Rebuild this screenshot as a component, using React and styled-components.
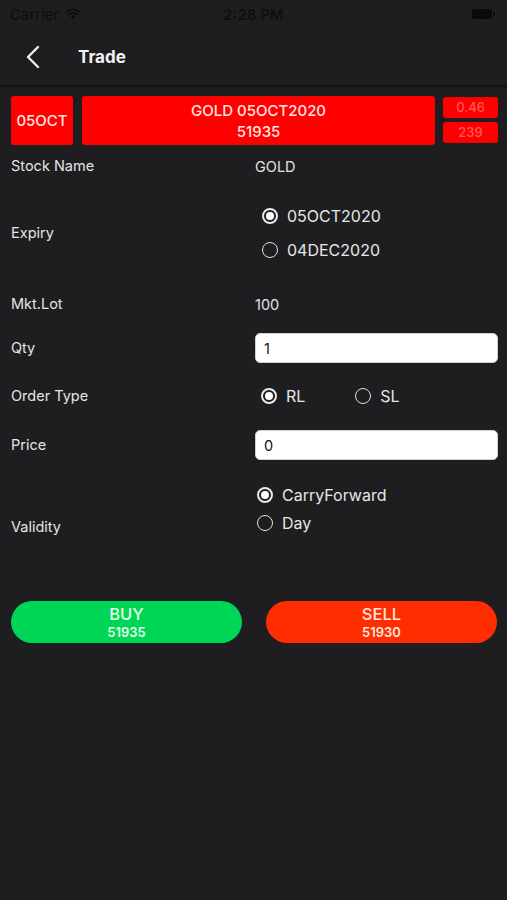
import React from 'react'
import styled, { createGlobalStyle } from 'styled-components'

const GlobalStyle = createGlobalStyle`
  html, body {
    margin: 0;
    padding: 0;
    background: #1e1e20;
  }
  body {
    font-family: Inter, "Liberation Sans", Arial, sans-serif;
  }
`

const Screen = styled.div`
  width: 507px;
  height: 900px;
  background: #1e1e20;
  display: flex;
  flex-direction: column;
`

const StatusBar = styled.div`
  height: 28px;
  display: grid;
  grid-template-columns: 1fr auto 1fr;
  align-items: center;
  padding: 0 10px;
  color: #0e0e0f;
  font-size: 15px;
`

const Carrier = styled.div`
  display: flex;
  align-items: center;
  gap: 6px;
`

const Time = styled.div`
  font-weight: 600;
`

const Battery = styled.div`
  justify-self: end;
  width: 20px;
  height: 10px;
  margin-right: 5px;
  background: #0a0a0a;
  border-radius: 2px;
  position: relative;
  &::after {
    content: '';
    position: absolute;
    right: -3px;
    top: 3px;
    width: 2px;
    height: 4px;
    background: #0a0a0a;
    border-radius: 0 1px 1px 0;
  }
`

const NavBar = styled.div`
  height: 57px;
  display: flex;
  align-items: center;
  padding-left: 26px;
  border-bottom: 2px solid #121214;
`

const NavTitle = styled.div`
  margin-left: 38px;
  color: #f2f2f2;
  font-size: 17px;
  font-weight: 700;
`

const Content = styled.div`
  padding: 9px 9px 0 11px;
  display: flex;
  flex-direction: column;
`

const TickerRow = styled.div`
  display: flex;
  height: 49px;
`

const RedBox = styled.div`
  background: #ff0000;
  border-radius: 3px;
  color: #ffe3e3;
  font-size: 15px;
  font-weight: 500;
  display: flex;
  flex-direction: column;
  align-items: center;
  justify-content: center;
  line-height: 21px;
`

const CodeBox = styled(RedBox)`
  width: 62px;
`

const NameBox = styled(RedBox)`
  width: 353px;
  margin-left: 9px;
`

const SideCol = styled.div`
  width: 55px;
  margin-left: 8px;
  display: flex;
  flex-direction: column;
  gap: 4px;
  padding-top: 1px;
`

const SmallBox = styled(RedBox)`
  height: 21px;
  font-size: 13px;
  color: #ff5a5a;
`

const Row = styled.div`
  display: flex;
  align-items: ${p => p.$align || 'center'};
  min-height: ${p => p.$h}px;
  margin-top: ${p => p.$top}px;
  padding-right: 1px;
`

const Label = styled.div`
  width: 244px;
  flex-shrink: 0;
  color: #e4e4e4;
  font-size: 14.5px;
  line-height: 20px;
`

const Value = styled.div`
  color: #e4e4e4;
  font-size: 14.5px;
`

const Input = styled.input`
  flex: 1;
  height: 30px;
  box-sizing: border-box;
  border: 1px solid #cfcfcf;
  border-radius: 5px;
  background: #ffffff;
  padding: 0 8px;
  font-family: Inter, "Liberation Sans", Arial, sans-serif;
  font-size: 14.5px;
  color: #111;
  outline: none;
`

const RadioList = styled.div`
  display: flex;
  flex-direction: ${p => (p.$inline ? 'row' : 'column')};
  padding-left: ${p => p.$indent}px;
  gap: ${p => (p.$inline ? '50px' : '0')};
`

const RadioItem = styled.div`
  display: flex;
  align-items: center;
  height: ${p => p.$h}px;
  gap: 9px;
  color: #e6e6e6;
  font-size: 16px;
`

const Circle = styled.span`
  width: 16px;
  height: 16px;
  box-sizing: border-box;
  border-radius: 50%;
  border: ${p => (p.$on ? '2px solid #e8e8e8' : '1.5px solid #e0e0e0')};
  display: flex;
  align-items: center;
  justify-content: center;
  &::after {
    content: '';
    display: ${p => (p.$on ? 'block' : 'none')};
    width: 8px;
    height: 8px;
    border-radius: 50%;
    background: #ffffff;
  }
`

const ButtonRow = styled.div`
  display: flex;
  justify-content: space-between;
  margin-top: 64px;
  padding-right: 1px;
`

const TradeButton = styled.button`
  width: 231px;
  height: 42px;
  border: none;
  border-radius: 21px;
  background: ${p => p.$bg};
  color: ${p => p.$fg};
  display: flex;
  flex-direction: column;
  align-items: center;
  justify-content: center;
  font-family: Inter, "Liberation Sans", Arial, sans-serif;
  padding: 0;
`

const BtnTitle = styled.span`
  font-size: 16.5px;
  font-weight: 500;
  line-height: 20px;
`

const BtnPrice = styled.span`
  font-size: 13px;
  font-weight: 600;
  line-height: 16px;
`

function Radio({ on, label, h }) {
  return (
    <RadioItem $h={h}>
      <Circle $on={on} />
      {label}
    </RadioItem>
  )
}

export default function App() {
  return (
    <Screen>
      <GlobalStyle />
      <StatusBar>
        <Carrier>
          Carrier
          <svg width="16" height="12" viewBox="0 0 16 12">
            <path d="M8 11.5 L5.6 8.8 A3.4 3.4 0 0 1 10.4 8.8 Z" fill="#0e0e0f" />
            <path d="M3.6 6.8 A6.2 6.2 0 0 1 12.4 6.8" stroke="#0e0e0f" strokeWidth="1.8" fill="none" strokeLinecap="round" />
            <path d="M1.2 4.3 A9.6 9.6 0 0 1 14.8 4.3" stroke="#0e0e0f" strokeWidth="1.8" fill="none" strokeLinecap="round" />
          </svg>
        </Carrier>
        <Time>2:28 PM</Time>
        <Battery />
      </StatusBar>

      <NavBar>
        <svg width="14" height="24" viewBox="0 0 14 24">
          <path d="M12 2 L2 12 L12 22" stroke="#f2f2f2" strokeWidth="2.4" fill="none" strokeLinecap="round" strokeLinejoin="round" />
        </svg>
        <NavTitle>Trade</NavTitle>
      </NavBar>

      <Content>
        <TickerRow>
          <CodeBox>05OCT</CodeBox>
          <NameBox>
            <span>GOLD 05OCT2020</span>
            <span>51935</span>
          </NameBox>
          <SideCol>
            <SmallBox>0.46</SmallBox>
            <SmallBox>239</SmallBox>
          </SideCol>
        </TickerRow>

        <Row $h={28} $top={7}>
          <Label>Stock Name</Label>
          <Value>GOLD</Value>
        </Row>

        <Row $h={68} $top={19}>
          <Label>Expiry</Label>
          <RadioList $indent={7}>
            <Radio on label="05OCT2020" h={34} />
            <Radio label="04DEC2020" h={34} />
          </RadioList>
        </Row>

        <Row $h={28} $top={23}>
          <Label>Mkt.Lot</Label>
          <Value>100</Value>
        </Row>

        <Row $h={30} $top={15}>
          <Label>Qty</Label>
          <Input defaultValue="1" />
        </Row>

        <Row $h={28} $top={19}>
          <Label>Order Type</Label>
          <RadioList $inline $indent={6}>
            <Radio on label="RL" h={28} />
            <Radio label="SL" h={28} />
          </RadioList>
        </Row>

        <Row $h={30} $top={20}>
          <Label>Price</Label>
          <Input defaultValue="0" />
        </Row>

        <Row $h={56} $top={21} $align="flex-end">
          <Label>Validity</Label>
          <RadioList $indent={2}>
            <Radio on label="CarryForward" h={28} />
            <Radio label="Day" h={28} />
          </RadioList>
        </Row>

        <ButtonRow>
          <TradeButton $bg="#00d655" $fg="#e6ffe9">
            <BtnTitle>BUY</BtnTitle>
            <BtnPrice>51935</BtnPrice>
          </TradeButton>
          <TradeButton $bg="#ff2d00" $fg="#ffe6de">
            <BtnTitle>SELL</BtnTitle>
            <BtnPrice>51930</BtnPrice>
          </TradeButton>
        </ButtonRow>
      </Content>
    </Screen>
  )
}
